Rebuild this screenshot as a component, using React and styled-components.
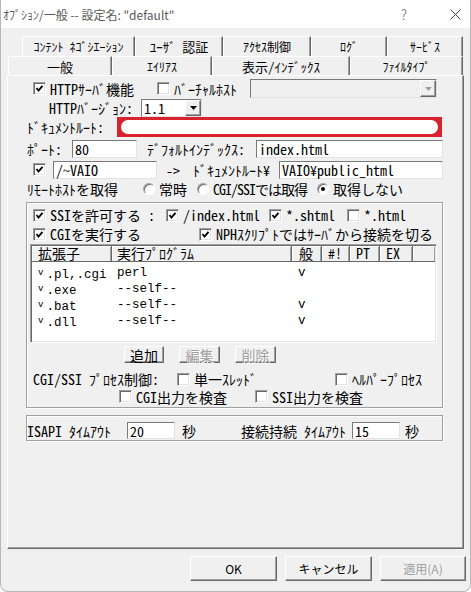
import React from "react";
import styled, { createGlobalStyle } from "styled-components";

const MONO = `"Noto Sans Mono CJK JP", "Noto Sans CJK JP", "Liberation Mono", monospace`;
const LATIN = `"Liberation Mono", "DejaVu Sans Mono", monospace`;
const UI = `"Noto Sans CJK JP", "Liberation Sans", sans-serif`;

const GlobalStyle = createGlobalStyle`
  * { box-sizing: border-box; }
  html, body { margin: 0; background: #fff; }
  body { font-family: ${MONO}; font-size: 14px; color: #000; }
`;

const Window = styled.div`
  width: 471px;
  height: 592px;
  background: #f0f0f0;
  border: 1px solid #b8b8b8;
  border-top: none;
  border-radius: 0 0 8px 8px;
  overflow: hidden;
  display: flex;
  flex-direction: column;
`;

const TitleBar = styled.div`
  height: 28px;
  flex-shrink: 0;
  background: #fff;
  display: flex;
  align-items: center;
  padding-left: 2px;
  font-family: ${UI};
  font-size: 12px;
  color: #5a5a5a;
  white-space: nowrap;
`;

const TitleTools = styled.div`
  margin-left: auto;
  display: flex;
  align-items: center;
  gap: 43px;
  padding-right: 9px;
  color: #666;
`;

const Help = styled.span`
  font-size: 14px;
  font-weight: 300;
`;

const TabRow = styled.div`
  display: flex;
  height: ${(p) => p.$h}px;
  margin-top: ${(p) => p.$mt || 0}px;
  margin-left: ${(p) => p.$ml}px;
`;

const Tab = styled.div`
  width: ${(p) => p.$w}px;
  flex-shrink: 0;
  display: flex;
  align-items: center;
  justify-content: center;
  border-top: 1px solid #fff;
  border-left: 1px solid #fff;
  border-right: 1px solid #696969;
  box-shadow: inset -1px 0 #a0a0a0;
  font-size: ${(p) => (p.$big ? 13 : 12)}px;
  white-space: nowrap;
`;

const Panel = styled.div`
  margin-left: 6px;
  width: 457px;
  height: 474px;
  flex-shrink: 0;
  border-top: 1px solid #fff;
  border-left: 1px solid #fff;
  border-right: 1px solid #696969;
  border-bottom: 1px solid #696969;
  box-shadow: inset -1px -1px #a0a0a0;
  padding: 3px 0 0 18px;
  display: flex;
  flex-direction: column;
`;

const Row = styled.div`
  display: flex;
  align-items: center;
  height: ${(p) => p.$h}px;
  margin-top: ${(p) => p.$mt || 0}px;
  padding-left: ${(p) => p.$pl || 0}px;
  white-space: nowrap;
  flex-shrink: 0;
`;

const Slot = styled.div`
  width: ${(p) => (p.$w ? `${p.$w}px` : "auto")};
  flex: ${(p) => (p.$w ? "0 0 auto" : "1")};
  display: flex;
  align-items: center;
  padding-left: ${(p) => p.$pl || 0}px;
  letter-spacing: ${(p) => p.$ls || 0}px;
`;

const Box = styled.span`
  width: 13px;
  height: 13px;
  flex-shrink: 0;
  background: #fff;
  border: 1px solid;
  border-color: #a0a0a0 #fff #fff #a0a0a0;
  box-shadow: inset 1px 1px #696969, inset -1px -1px #e3e3e3;
  display: inline-flex;
  align-items: center;
  justify-content: center;
  margin-right: ${(p) => (p.$gap === undefined ? 4 : p.$gap)}px;
`;

const RadioDot = styled.span`
  width: 12px;
  height: 12px;
  flex-shrink: 0;
  border-radius: 50%;
  background: #fff;
  border: 1px solid;
  border-color: #a0a0a0 #fff #fff #a0a0a0;
  box-shadow: inset 1px 1px #696969;
  display: inline-flex;
  align-items: center;
  justify-content: center;
  margin-right: 4px;
  &::after {
    content: "";
    width: 4px;
    height: 4px;
    border-radius: 50%;
    background: ${(p) => (p.$on ? "#000" : "transparent")};
  }
`;

const Field = styled.div`
  width: ${(p) => p.$w}px;
  height: ${(p) => p.$h || 18}px;
  flex-shrink: 0;
  background: ${(p) => (p.$disabled ? "#f0f0f0" : "#fff")};
  border: 1px solid;
  border-color: #7a7a7a #e3e3e3 #e3e3e3 #7a7a7a;
  padding-left: 2px;
  display: flex;
  align-items: center;
  justify-content: space-between;
`;

const DropBtn = styled.span`
  width: 16px;
  height: 100%;
  background: #f0f0f0;
  border: 1px solid;
  border-color: #fff #696969 #696969 #fff;
  box-shadow: inset -1px -1px #a0a0a0;
  display: flex;
  align-items: center;
  justify-content: center;
`;

const Redact = styled.div`
  width: 325px;
  height: 20px;
  flex-shrink: 0;
  background: #d8232f;
  padding: 3px 4px;
`;

const RedactInner = styled.div`
  height: 100%;
  background: #fff;
  border-radius: 7px;
`;

const Group = styled.div`
  width: 417px;
  height: ${(p) => p.$h}px;
  margin-top: ${(p) => p.$mt}px;
  flex-shrink: 0;
  border: 1px solid #a0a0a0;
  box-shadow: inset 1px 1px #fff, 1px 1px #fff;
  padding-top: ${(p) => p.$pt}px;
  display: flex;
  flex-direction: column;
`;

const List = styled.div`
  margin-left: 3px;
  width: 407px;
  height: 99px;
  flex-shrink: 0;
  background: #fff;
  border: 1px solid;
  border-color: #a0a0a0 #fff #fff #a0a0a0;
  box-shadow: inset 1px 1px #696969, inset -1px -1px #e3e3e3;
  padding: 1px;
  display: flex;
  flex-direction: column;
`;

const ListHead = styled.div`
  display: flex;
  height: 16px;
  background: #f0f0f0;
  border-bottom: 1px solid #696969;
  flex-shrink: 0;
`;

const HeadCell = styled.div`
  width: ${(p) => (p.$w ? `${p.$w}px` : "auto")};
  flex: ${(p) => (p.$w ? "0 0 auto" : "1")};
  border-right: ${(p) => (p.$w ? "1px solid #696969" : "none")};
  box-shadow: inset 1px 1px #fff, inset -1px 0 #a0a0a0;
  padding-left: ${(p) => p.$pl || 6}px;
  line-height: 15px;
  white-space: nowrap;
`;

const ListBody = styled.div`
  padding-top: 3px;
`;

const ListRow = styled.div`
  display: flex;
  height: 16px;
  line-height: 16px;
  white-space: nowrap;
  font-family: ${LATIN};
  font-size: 12.5px;
`;

const Cell = styled.div`
  width: ${(p) => p.$w}px;
  flex-shrink: 0;
  padding-left: ${(p) => p.$pl || 0}px;
`;

const Mark = styled.span`
  font-size: 9px;
  vertical-align: 3px;
  margin-right: 3px;
`;

const SmallButton = styled.button`
  width: ${(p) => p.$w}px;
  height: 17px;
  padding: 0;
  font-family: ${MONO};
  font-size: 14px;
  line-height: 14px;
  background: #f0f0f0;
  color: ${(p) => (p.disabled ? "#a0a0a0" : "#000")};
  text-shadow: ${(p) => (p.disabled ? "1px 1px #fff" : "none")};
  border: 1px solid;
  border-color: #fff #696969 #696969 #fff;
  box-shadow: inset -1px -1px #a0a0a0;
`;

const ButtonRow = styled.div`
  display: flex;
  gap: 15px;
  height: 17px;
  margin-top: 3px;
  padding-left: 97px;
  flex-shrink: 0;
`;

const Footer = styled.div`
  display: flex;
  justify-content: flex-end;
  gap: 8px;
  margin-top: 7px;
  padding-right: 4px;
`;

const DlgButton = styled.button`
  width: ${(p) => p.$w}px;
  height: 25px;
  padding: 0;
  font-family: ${UI};
  font-size: 12px;
  background: #f0f0f0;
  color: ${(p) => (p.disabled ? "#a0a0a0" : "#000")};
  border: 1px solid;
  border-color: #fff #696969 #696969 #fff;
  box-shadow: inset -1px -1px #a0a0a0;
`;

const Tick = () => (
  <svg width="9" height="9" viewBox="0 0 9 9">
    <polyline points="1.5,4 3.5,6.5 7.5,1.8" fill="none" stroke="#000" strokeWidth="1.8" />
  </svg>
);

const Arrow = ({ color }) => (
  <svg width="7" height="4" viewBox="0 0 7 4">
    <polygon points="0,0 7,0 3.5,4" fill={color} />
  </svg>
);

const Check = ({ on, children, gap }) => (
  <>
    <Box $gap={gap}>{on && <Tick />}</Box>
    {children}
  </>
);

const Radio = ({ on, children }) => (
  <>
    <RadioDot $on={on} />
    {children}
  </>
);

const cols = [80, 180, 30, 28, 30, 33];

const rows = [
  [".pl,.cgi", "perl", "v"],
  [".exe", "--self--", ""],
  [".bat", "--self--", "v"],
  [".dll", "--self--", "v"],
];

export default function App() {
  return (
    <>
      <GlobalStyle />
      <Window>
        <TitleBar>
          ｵﾌﾟｼｮﾝ/一般 -- 設定名: "default"
          <TitleTools>
            <Help>?</Help>
            <svg width="11" height="11" viewBox="0 0 11 11">
              <path d="M0.5 0.5 L10.5 10.5 M10.5 0.5 L0.5 10.5" stroke="#444" strokeWidth="1" />
            </svg>
          </TitleTools>
        </TitleBar>

        <TabRow $h={20} $mt={8} $ml={21}>
          <Tab $w={113}>ｺﾝﾃﾝﾄ ﾈｺﾞｼｴｰｼｮﾝ</Tab>
          <Tab $w={88} $big>ﾕｰｻﾞ 認証</Tab>
          <Tab $w={88}>ｱｸｾｽ制御</Tab>
          <Tab $w={76}>ﾛｸﾞ</Tab>
          <Tab $w={76}>ｻｰﾋﾞｽ</Tab>
        </TabRow>
        <TabRow $h={19} $ml={7}>
          <Tab $w={104} $big>一般</Tab>
          <Tab $w={100}>ｴｲﾘｱｽ</Tab>
          <Tab $w={138} $big>表示/ｲﾝﾃﾞｯｸｽ</Tab>
          <Tab $w={113}>ﾌｧｲﾙﾀｲﾌﾟ</Tab>
        </TabRow>

        <Panel>
          <Row $h={19} $pl={7}>
            <Slot $w={124}>
              <Check on>HTTPｻｰﾊﾞ機能</Check>
            </Slot>
            <Slot $w={93}>
              <Check>ﾊﾞｰﾁｬﾙﾎｽﾄ</Check>
            </Slot>
            <Field $w={187} $h={19} $disabled>
              <span />
              <DropBtn>
                <Arrow color="#a0a0a0" />
              </DropBtn>
            </Field>
          </Row>

          <Row $h={19} $pl={23}>
            <Slot $w={92}>HTTPﾊﾞｰｼﾞｮﾝ:</Slot>
            <Field $w={61}>
              1.1
              <DropBtn>
                <Arrow color="#000" />
              </DropBtn>
            </Field>
          </Row>

          <Row $h={20} $pl={1}>
            <Slot $w={90}>ﾄﾞｷｭﾒﾝﾄﾙｰﾄ:</Slot>
            <Redact>
              <RedactInner />
            </Redact>
          </Row>

          <Row $h={19} $mt={2} $pl={1}>
            <Slot $w={45}>ﾎﾟｰﾄ:</Slot>
            <Field $w={65}>80</Field>
            <Slot $w={119} $pl={10}>ﾃﾞﾌｫﾙﾄｲﾝﾃﾞｯｸｽ:</Slot>
            <Field $w={187}>index.html</Field>
          </Row>

          <Row $h={19} $mt={2} $pl={7}>
            <Slot $w={20}>
              <Check on gap={0} />
            </Slot>
            <Field $w={104}>/~VAIO</Field>
            <Slot $w={36} $pl={9}>-&gt;</Slot>
            <Slot $w={86}>ﾄﾞｷｭﾒﾝﾄﾙｰﾄ¥</Slot>
            <Field $w={164}>VAIO¥public_html</Field>
          </Row>

          <Row $h={18} $mt={1} $pl={1}>
            <Slot $w={116}>ﾘﾓｰﾄﾎｽﾄを取得</Slot>
            <Slot $w={54}>
              <Radio>常時</Radio>
            </Slot>
            <Slot $w={120} $ls={-1}>
              <Radio>CGI/SSIでは取得</Radio>
            </Slot>
            <Slot>
              <Radio on>取得しない</Radio>
            </Slot>
          </Row>

          <Group $h={206} $mt={4} $pt={3}>
            <Row $h={18} $pl={6}>
              <Slot $w={133}>
                <Check on>SSIを許可する :</Check>
              </Slot>
              <Slot $w={103}>
                <Check on>/index.html</Check>
              </Slot>
              <Slot $w={78}>
                <Check on>*.shtml</Check>
              </Slot>
              <Slot>
                <Check>*.html</Check>
              </Slot>
            </Row>
            <Row $h={20} $pl={6}>
              <Slot $w={166}>
                <Check on>CGIを実行する</Check>
              </Slot>
              <Slot>
                <Check on>NPHｽｸﾘﾌﾟﾄではｻｰﾊﾞから接続を切る</Check>
              </Slot>
            </Row>

            <List>
              <ListHead>
                <HeadCell $w={cols[0]}>拡張子</HeadCell>
                <HeadCell $w={cols[1]} $pl={5}>実行ﾌﾟﾛｸﾞﾗﾑ</HeadCell>
                <HeadCell $w={cols[2]} $pl={7}>般</HeadCell>
                <HeadCell $w={cols[3]}>#!</HeadCell>
                <HeadCell $w={cols[4]}>PT</HeadCell>
                <HeadCell $w={cols[5]}>EX</HeadCell>
                <HeadCell />
              </ListHead>
              <ListBody>
                {rows.map(([ext, prog, flag]) => (
                  <ListRow key={ext}>
                    <Cell $w={cols[0]} $pl={6}>
                      <Mark>v</Mark>
                      {ext}
                    </Cell>
                    <Cell $w={cols[1]} $pl={5}>
                      {prog}
                    </Cell>
                    <Cell $w={cols[2]} $pl={6}>
                      {flag}
                    </Cell>
                  </ListRow>
                ))}
              </ListBody>
            </List>

            <ButtonRow>
              <SmallButton $w={40}>追加</SmallButton>
              <SmallButton $w={41} disabled>
                編集
              </SmallButton>
              <SmallButton $w={41} disabled>
                削除
              </SmallButton>
            </ButtonRow>

            <Row $h={18} $mt={7} $pl={6}>
              <Slot $w={144}>CGI/SSI ﾌﾟﾛｾｽ制御:</Slot>
              <Slot $w={158}>
                <Check>単一ｽﾚｯﾄﾞ</Check>
              </Slot>
              <Slot>
                <Check>ﾍﾙﾊﾟｰﾌﾟﾛｾｽ</Check>
              </Slot>
            </Row>
            <Row $h={17} $pl={92}>
              <Slot $w={136}>
                <Check>CGI出力を検査</Check>
              </Slot>
              <Slot>
                <Check>SSI出力を検査</Check>
              </Slot>
            </Row>
          </Group>

          <Group $h={26} $mt={7} $pt={6}>
            <Row $h={17}>
              <Slot $w={100}>ISAPI ﾀｲﾑｱｳﾄ</Slot>
              <Field $w={48} $h={17}>20</Field>
              <Slot $w={66} $pl={7}>秒</Slot>
              <Slot $w={111}>接続持続 ﾀｲﾑｱｳﾄ</Slot>
              <Field $w={48} $h={17}>15</Field>
              <Slot $pl={5}>秒</Slot>
            </Row>
          </Group>
        </Panel>

        <Footer>
          <DlgButton $w={87}>OK</DlgButton>
          <DlgButton $w={87}>キャンセル</DlgButton>
          <DlgButton $w={86} disabled>
            適用(A)
          </DlgButton>
        </Footer>
      </Window>
    </>
  );
}
